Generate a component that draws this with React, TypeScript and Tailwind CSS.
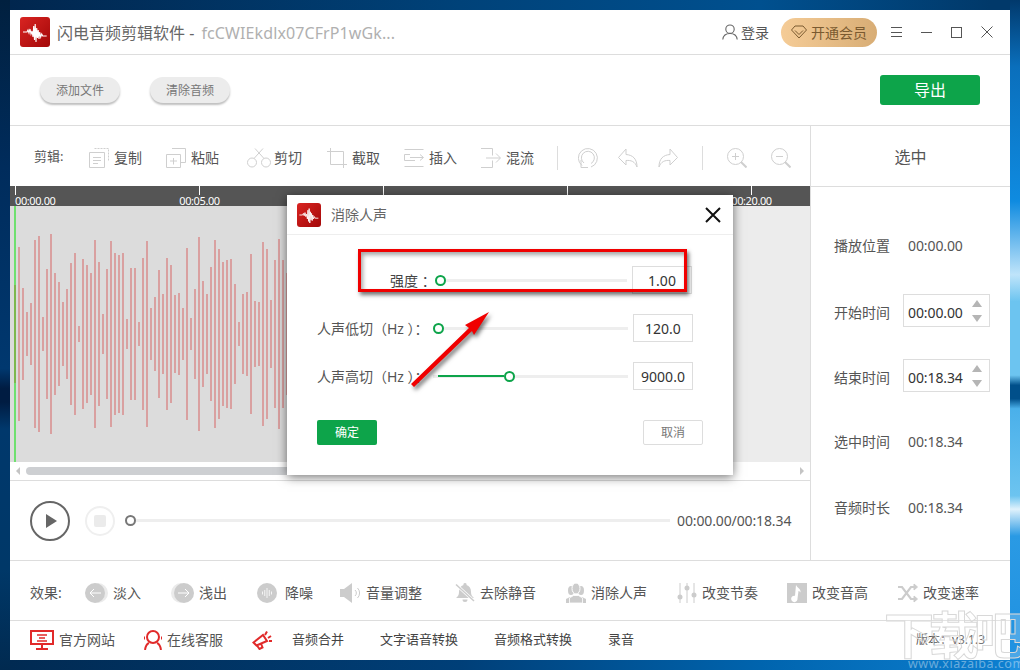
import type { ReactNode } from "react";

const WAVE = [
  87, 46, 22, 31, 94, 98, 17, 65, 100, 61, 52, 32, 45, 71, 81, 8, 75, 69, 61, 94, 72, 20, 65, 93, 81, 79, 81, 15, 66,
  66, 12, 76, 93, 26, 37, 64, 40, 76, 69, 39, 41, 26, 86, 16, 45, 97, 53, 40, 67, 94, 85, 72, 74, 75, 50, 12, 40, 42,
  80, 33, 32, 92, 85, 34, 74, 95, 74, 61,
];

function Logo({ size }: { size: string }) {
  return (
    <div
      className={`${size} flex shrink-0 items-center justify-center rounded-[3px] bg-[linear-gradient(135deg,#d92422,#a30808)]`}
    >
      <svg viewBox="0 0 30 30" className="h-full w-full" fill="none" stroke="#fff" strokeWidth="1.1">
        <path d="M3 15h4l1-2 1 3 1-4 1 5 1-3 1 6 .7-11 .8 14 .7-16 .8 18 .7-14 .8 10 .7-8 .8 9 .7-7 1 5 1-3 1 2h4" />
      </svg>
    </div>
  );
}

function Line({ children, w = 20, h = 20, className = "" }: { children: ReactNode; w?: number; h?: number; className?: string }) {
  return (
    <svg width={w} height={h} viewBox={`0 0 ${w} ${h}`} fill="none" stroke="#cfcfcf" strokeWidth="1" className={`shrink-0 ${className}`}>
      {children}
    </svg>
  );
}

function Tool({ icon, label, className }: { icon: ReactNode; label: string; className: string }) {
  return (
    <div className={`flex items-center ${className}`}>
      {icon}
      <span className="ml-[5px]">{label}</span>
    </div>
  );
}

function Thumb({ color = "border-[#0da44a]" }: { color?: string }) {
  return <div className={`h-[11px] w-[11px] shrink-0 rounded-full border-[2.5px] bg-white ${color}`} />;
}

function ParamRow({
  label,
  value,
  fill = 0,
  labelClass,
  trackClass,
}: {
  label: string;
  value: string;
  fill?: number;
  labelClass: string;
  trackClass: string;
}) {
  return (
    <div className="flex h-[28px] items-center">
      <span className={`shrink-0 whitespace-nowrap ${labelClass}`}>{label}</span>
      <div className={`flex h-[3px] shrink-0 items-center bg-[#eeeeee] ${trackClass}`}>
        {fill > 0 && <div className="ml-[5px] h-[2px] bg-[#0da44a]" style={{ width: fill }} />}
        <Thumb />
      </div>
      <div className="ml-[5px] flex h-[28px] w-[60px] items-center justify-center border border-[#dddddd] text-[#333]">
        {value}
      </div>
    </div>
  );
}

function TimeRow({ label, value, spin, textClass = "" }: { label: string; value: string; spin?: boolean; textClass?: string }) {
  return (
    <div className="flex h-[33px] items-center tracking-[-0.1px]">
      <span className={`w-[69px] shrink-0 tracking-normal ${textClass}`}>{label}</span>
      {spin ? (
        <div className="flex h-[33px] w-[87px] items-center justify-between border border-[#dddddd] pl-[4px] pr-[7px] text-[#333]">
          <span className={textClass}>{value}</span>
          <div className="flex flex-col gap-[8px]">
            <div className="h-0 w-0 border-x-[5.5px] border-b-[7px] border-x-transparent border-b-[#b5b5b5]" />
            <div className="h-0 w-0 border-x-[5.5px] border-t-[7px] border-x-transparent border-t-[#b5b5b5]" />
          </div>
        </div>
      ) : (
        <span className={`ml-[5px] ${textClass}`}>{value}</span>
      )}
    </div>
  );
}

export default function App() {
  return (
    <div className="relative flex h-[670px] w-[1020px] overflow-hidden bg-white font-['Noto_Sans','Noto_Sans_CJK_SC',sans-serif] text-[14px] text-[#555]">
      <div className="w-[10px] shrink-0 bg-[linear-gradient(180deg,#01203f_0%,#002c5c_25%,#00386f_55%,#001c42_58%,#001c42_60%,#00386c_64%,#003868_85%,#012a50_100%)]" />

      <div className="flex w-[1000px] flex-col">
        <div className="h-[10px] shrink-0 bg-[linear-gradient(90deg,#01264e,#004279_45%,#00508f_75%,#01396a_98%)]" />

        <div className="flex h-[650px] flex-col bg-white">
          {/* title bar */}
          <div className="flex h-[45px] shrink-0 items-center border-b border-[#dddddd] pl-[10px]">
            <Logo size="h-[30px] w-[30px]" />
            <div className="ml-[7px] whitespace-nowrap pt-[2px] text-[16px] text-[#666]">
              闪电音频剪辑软件 - <span className="ml-[3px] tracking-[0.1px] text-[#b0b0b0]">fcCWIEkdlx07CFrP1wGk...</span>
            </div>
            <div className="ml-auto flex items-center pr-[17px]">
              <svg width="16" height="16" viewBox="0 0 16 16" fill="none" stroke="#666" strokeWidth="1.1">
                <circle cx="8" cy="5.2" r="4.2" />
                <path d="M.8 15.5c.4-3.7 3-6 7.2-6s6.8 2.3 7.2 6" />
              </svg>
              <span className="ml-[3px]">登录</span>
              <div className="ml-[12px] flex h-[29px] w-[96px] items-center justify-center gap-[4px] rounded-full bg-[linear-gradient(90deg,#f5cc97,#d8ad75)] text-[#7a5a30]">
                <svg width="16" height="14" viewBox="0 0 16 14" fill="none" stroke="#7a5a30" strokeWidth="1">
                  <path d="M4 1h8l3.5 4L8 13 .5 5z" />
                  <path d="M4 5.5l4 4 4-4" />
                </svg>
                开通会员
              </div>
              <div className="ml-[14px] flex w-[11px] flex-col gap-[3.5px]">
                <div className="h-px bg-[#555]" />
                <div className="h-px bg-[#555]" />
                <div className="h-px bg-[#555]" />
              </div>
              <div className="ml-[19px] h-px w-[11px] bg-[#555]" />
              <div className="ml-[19px] h-[11px] w-[11px] border border-[#555]" />
              <svg width="12" height="12" viewBox="0 0 12 12" stroke="#555" className="ml-[19px]">
                <path d="M.5.5l11 11M11.5.5l-11 11" />
              </svg>
            </div>
          </div>

          {/* file actions */}
          <div className="flex h-[71px] shrink-0 items-center border-b border-[#dddddd] px-[30px] text-[12px] text-[#777]">
            <div className="flex h-[26px] w-[80px] items-center justify-center rounded-full bg-[#ececec] pt-px shadow-[0_2px_2px_rgba(0,0,0,0.25)]">
              添加文件
            </div>
            <div className="ml-[30px] flex h-[26px] w-[80px] items-center justify-center rounded-full bg-[#ececec] pt-px shadow-[0_2px_2px_rgba(0,0,0,0.25)]">
              清除音频
            </div>
            <div className="ml-auto flex h-[30px] w-[100px] items-center justify-center rounded-[3px] bg-[#0da44a] text-[16px] text-white">
              导出
            </div>
          </div>

          <div className="flex h-[435px] shrink-0 border-b border-[#dddddd]">
            {/* editor */}
            <div className="flex w-[800px] shrink-0 flex-col">
              <div className="flex h-[60px] shrink-0 items-center pl-[24px] pt-[4px] [&_span]:mb-[2px]">
                <span className="w-[55px] shrink-0 text-[13px]">剪辑:</span>
                <Tool
                  className="w-[77px]"
                  label="复制"
                  icon={
                    <Line>
                      <path d="M5.5.5h14v13" strokeDasharray="2 1" />
                      <path d="M.5 4.5h15v15H.5z" fill="#fff" />
                      <path d="M4 9.5h8M4 12.5h8M4 15.5h5" />
                    </Line>
                  }
                />
                <Tool
                  className="w-[81px]"
                  label="粘贴"
                  icon={
                    <Line>
                      <path d="M6 .5h13.5v14H14" />
                      <path d="M.5 6.5h14v13H.5z" fill="#fff" />
                      <path d="M7.5 10v6.5M4 13h7" />
                    </Line>
                  }
                />
                <Tool
                  className="w-[80px]"
                  label="剪切"
                  icon={
                    <Line w={24} className="-mr-[2px]">
                      <circle cx="5" cy="14.5" r="4.5" />
                      <circle cx="19" cy="14.5" r="4.5" />
                      <path d="M7 10.5L16 .5M17 10.5L8 .5" />
                    </Line>
                  }
                />
                <Tool
                  className="w-[77px]"
                  label="截取"
                  icon={
                    <Line>
                      <path d="M0 3.5h16.5V20M3.5 0v16.5H20" />
                    </Line>
                  }
                />
                <Tool
                  className="w-[77px]"
                  label="插入"
                  icon={
                    <Line>
                      <path d="M.5 1.5h19M6 6.5H.5v6H11M19.5 18.5H.5" />
                      <path d="M6 9.5h13M16 6.5l3.5 3-3.5 3" />
                    </Line>
                  }
                />
                <Tool
                  className="w-[76px]"
                  label="混流"
                  icon={
                    <Line>
                      <path d="M0 .5h11.5v7M11.5 12.5v7H0" />
                      <path d="M5 10h14M15 5.5l4.5 4.5-4.5 4.5" />
                    </Line>
                  }
                />
                <div className="h-[24px] w-px bg-[#dddddd]" />
                <div className="ml-[20px]">
                  <Line>
                    <path d="M13 19A9.5 9.5 0 1 0 4 17.5" />
                    <path d="M13 15.5A6.5 6.5 0 1 0 6 15" />
                    <path d="M3 12v7.5h7" />
                  </Line>
                </div>
                <div className="ml-[20px]">
                  <Line>
                    <path d="M8 1L.5 9.500 8 17v-4.500c5-.5 9 1 11 6.500 0-8-4-12-11-12.500z" />
                  </Line>
                </div>
                <div className="ml-[20px]">
                  <Line>
                    <path d="M12 1l7.500 8.500L12 17v-4.500c-5-.5-9 1-11 6.500 0-8 4-12 11-12.500z" />
                  </Line>
                </div>
                <div className="ml-[24px] h-[24px] w-px bg-[#dddddd]" />
                <div className="ml-[24px]">
                  <Line>
                    <circle cx="8.5" cy="8.5" r="8" />
                    <path d="M8.5 5v7M5 8.5h7" />
                    <path d="M14 14l5.5 5.5" strokeWidth="2" />
                  </Line>
                </div>
                <div className="ml-[24px]">
                  <Line>
                    <circle cx="8.5" cy="8.5" r="8" />
                    <path d="M5 8.5h7" />
                    <path d="M14 14l5.5 5.5" strokeWidth="2" />
                  </Line>
                </div>
              </div>

              {/* ruler */}
              <div className="flex h-[20px] shrink-0 gap-[183px] bg-[#555555] pl-[5px] text-[11px] leading-[11px] tracking-[-0.4px] text-white">
                {["00:00.00", "00:05.00", "00:10.00", "00:15.00", "00:20.00"].map((t, i) => (
                  <div key={t} className={`flex w-px flex-col ${i === 0 ? "items-start" : "items-center"}`}>
                    <div className="h-[9px] w-px shrink-0 bg-white" />
                    <span className="whitespace-nowrap">{t}</span>
                  </div>
                ))}
              </div>

              {/* wave */}
              <div className="flex h-[256px] shrink-0 bg-[#ececec]">
                <div className="flex w-[680px] items-center overflow-hidden bg-[#dcdcdc] pl-[4px]">
                  <div className="flex h-full w-[2px] shrink-0 flex-col justify-center bg-[#6fe06f]">
                    <div className="h-[98px] bg-[#7db84e]" />
                  </div>
                  <div className="ml-[2px] flex items-center gap-[2px]">
                    {WAVE.map((v, i) => (
                      <div key={i} className="w-[2px] shrink-0 bg-[#d9a0a0]" style={{ height: v * 2 }} />
                    ))}
                  </div>
                </div>
              </div>

              {/* scrollbar */}
              <div className="flex h-[18px] shrink-0 items-center px-[6px]">
                <div className="h-0 w-0 border-y-[4px] border-r-[4px] border-y-transparent border-r-[#c4c4c4]" />
                <div className="ml-[6px] h-[8px] w-[340px] rounded-full bg-[#cdcfd2]" />
                <div className="ml-auto h-0 w-0 border-y-[4px] border-l-[4px] border-y-transparent border-l-[#c4c4c4]" />
              </div>

              {/* player */}
              <div className="flex flex-1 items-center border-t border-[#dddddd] pl-[20px]">
                <div className="flex h-[40px] w-[40px] items-center justify-center rounded-full border-2 border-[#666]">
                  <div className="ml-[3px] h-0 w-0 border-y-[7.5px] border-l-[11px] border-y-transparent border-l-[#666]" />
                </div>
                <div className="ml-[15px] flex h-[30px] w-[30px] items-center justify-center rounded-full border-2 border-[#efefef]">
                  <div className="h-[12px] w-[12px] rounded-[2px] bg-[#ebebeb]" />
                </div>
                <div className="ml-[10px] flex h-[3px] w-[545px] items-center bg-[#eeeeee]">
                  <Thumb color="border-[#777]" />
                </div>
                <span className="ml-[7px] whitespace-nowrap tracking-[-0.12px]">00:00.00/00:18.34</span>
              </div>
            </div>

            {/* selection panel */}
            <div className="flex flex-1 flex-col border-l border-[#dddddd]">
              <div className="flex h-[61px] shrink-0 items-center justify-center border-b border-[#dddddd] pt-[2px] text-[16px] text-[#555]">
                选中
              </div>
              <div className="flex flex-col gap-[32px] pl-[23px] pt-[42px]">
                <TimeRow label="播放位置" value="00:00.00" />
                <TimeRow label="开始时间" value="00:00.00" spin textClass="pt-[3px]" />
                <TimeRow label="结束时间" value="00:18.34" spin textClass="pt-[3px]" />
                <TimeRow label="选中时间" value="00:18.34" textClass="pt-px" />
                <TimeRow label="音频时长" value="00:18.34" textClass="pt-[3px]" />
              </div>
            </div>
          </div>

          {/* effects */}
          <div className="flex h-[60px] shrink-0 items-center border-b border-[#dddddd] pl-[20px] pt-[4px]">
            <span className="w-[55px] shrink-0">效果:</span>
            <Tool
              className="w-[86px]"
              label="淡入"
              icon={
                <svg width="23" height="20" viewBox="0 0 23 20">
                  <circle cx="13" cy="10" r="10" fill="#ebebeb" />
                  <circle cx="10" cy="10" r="10" fill="#cccccc" />
                  <path d="M16 10H5M9 6l-4 4 4 4" stroke="#fff" fill="none" />
                </svg>
              }
            />
            <Tool
              className="w-[86px]"
              label="浅出"
              icon={
                <svg width="23" height="20" viewBox="0 0 23 20">
                  <circle cx="10" cy="10" r="10" fill="#ebebeb" />
                  <circle cx="13" cy="10" r="10" fill="#cccccc" />
                  <path d="M7 10h11M14 6l4 4-4 4" stroke="#fff" fill="none" />
                </svg>
              }
            />
            <div className="flex w-[83px] items-center">
              <svg width="20" height="20" viewBox="0 0 20 20" className="shrink-0">
                <circle cx="10" cy="10" r="10" fill="#cccccc" />
                <path d="M5.5 8.5v3M7.75 7v6M10 5v10M12.25 7v6M14.5 8.5v3" stroke="#fff" strokeWidth=".8" />
              </svg>
              <span className="ml-[8px]">降噪</span>
            </div>
            <div className="flex w-[115px] items-center">
              <svg width="23" height="20" viewBox="0 0 23 20" className="shrink-0">
                <path d="M0 6h4l8-6v20l-8-6H0z" fill="#cccccc" />
                <path d="M15 7a4 4 0 0 1 0 6M17.5 5a7 7 0 0 1 0 10" stroke="#cccccc" fill="none" />
              </svg>
              <span className="ml-[3px]">音量调整</span>
            </div>
            <Tool
              className="w-[111px]"
              label="去除静音"
              icon={
                <svg width="20" height="20" viewBox="0 0 20 20" className="shrink-0">
                  <path d="M10 0a1.5 1.5 0 0 1 1.5 2c3 1 4.5 3.5 4.5 7 0 3 1 4 3 6H1c2-2 3-3 3-6 0-3.5 1.5-6 4.5-7A1.5 1.5 0 0 1 10 0zM7.5 16.5h5a2.500 2.500 0 0 1-5 0z" fill="#cccccc" />
                  <path d="M1 1.5L19 18" stroke="#fff" strokeWidth="3" />
                  <path d="M1 1.5L19 18" stroke="#cccccc" strokeWidth="1.5" />
                </svg>
              }
            />
            <Tool
              className="w-[111px]"
              label="消除人声"
              icon={
                <svg width="20" height="20" viewBox="0 0 20 20" className="shrink-0" fill="#cccccc">
                  <ellipse cx="5" cy="7.5" rx="3" ry="4.5" />
                  <ellipse cx="15" cy="7.5" rx="3" ry="4.5" />
                  <path d="M0 20v-4l4-2h12l4 2v4z" />
                  <ellipse cx="10" cy="5.5" rx="4" ry="5.5" stroke="#fff" />
                  <path d="M3.5 20v-5l4-2.5h5l4 2.5v5z" stroke="#fff" strokeWidth=".8" />
                </svg>
              }
            />
            <Tool
              className="w-[110px]"
              label="改变节奏"
              icon={
                <svg width="20" height="20" viewBox="0 0 20 20" className="shrink-0">
                  <path d="M3 0v20M10 0v20M17 0v20" stroke="#cccccc" />
                  <circle cx="3" cy="14" r="2.5" fill="#cccccc" />
                  <circle cx="10" cy="5" r="2.5" fill="#cccccc" />
                  <circle cx="17" cy="12" r="2.5" fill="#cccccc" />
                </svg>
              }
            />
            <Tool
              className="w-[111px]"
              label="改变音高"
              icon={
                <svg width="20" height="20" viewBox="0 0 20 20" className="shrink-0">
                  <path d="M0 0h20v20H0z" fill="#cccccc" />
                  <path d="M9 2c1.5 3 5 3.5 4.5 7.5C12.500 8 12 8 11.500 8l-1 7.500A3.200 3.200 0 1 1 8 12.800z" fill="#fff" />
                </svg>
              }
            />
            <Tool
              label="改变速率"
              className=""
              icon={
                <svg width="20" height="20" viewBox="0 0 20 20" fill="none" stroke="#cccccc" className="shrink-0">
                  <path d="M0 4h4l9 12h4M0 16h4l9-12h4" strokeWidth="2.2" />
                  <path d="M16 1l3.5 3-3.5 3zM16 13l3.5 3-3.5 3z" fill="#cccccc" strokeWidth="1" />
                </svg>
              }
            />
          </div>

          {/* footer */}
          <div className="flex flex-1 items-center pb-[2px] pl-[20px] pr-[25px] text-[13px] text-[#444]">
            <Tool
              className="w-[114px] text-[14px] text-[#555]"
              label="官方网站"
              icon={
                <svg width="24" height="20" viewBox="0 0 24 20" fill="none" stroke="#e12a2a" strokeWidth="2">
                  <path d="M1 1h22v13H1zM12 14v4M6 19h12" />
                  <path d="M7 5h10M9 8h6M7 11h10" strokeWidth="1.5" />
                </svg>
              }
            />
            <Tool
              className="w-[108px] text-[14px] text-[#555]"
              label="在线客服"
              icon={
                <svg width="18" height="20" viewBox="0 0 18 20" fill="none" stroke="#e12a2a" strokeWidth="2">
                  <circle cx="9" cy="7" r="6" />
                  <path d="M5 13C2.5 14 1.5 16.5 1 20M13 13c2.5 1 3.5 3.5 4 7" />
                  <path d="M0 6.5v3M18 6.5v3" />
                </svg>
              }
            />
            <div className="flex w-[128px] items-center">
              <svg width="20" height="20" viewBox="0 0 20 20" fill="none" stroke="#e12a2a" strokeWidth="2" className="shrink-0">
                <path d="M1.5 12.5L11 5l4 6-10.5 4.500zM5 15.500l2.500 3.500 3-1.500-1.500-4" />
                <path d="M13 5l2-3.500M16 8l3-2M17 11h3" />
              </svg>
              <span className="ml-[20px]">音频合并</span>
            </div>
            <span className="w-[114px] shrink-0">文字语音转换</span>
            <span className="w-[114px] shrink-0">音频格式转换</span>
            <span>录音</span>
            <span className="ml-auto text-[12px] text-[#555]">版本：v3.1.3</span>
          </div>
        </div>

        <div className="h-[10px] shrink-0 bg-[linear-gradient(90deg,#012a52,#003f78_45%,#0064ae_75%,#0d7fd0)]" />
      </div>

      <div className="w-[10px] shrink-0 bg-[linear-gradient(180deg,#01396c_0%,#0a6fbc_10%,#0f8be0_30%,#bfe4fa_41%,#6cc4f0_45%,#6cc4f0_56%,#004f8a_57.5%,#004f8a_59.5%,#4ab0ea_61%,#6cc4f0_74%,#e0f2fc_76%,#2a9ae4_80%,#1e90e0_100%)]" />

      {/* dialog */}
      <div className="absolute left-[287px] top-[195px] flex h-[280px] w-[446px] flex-col bg-white shadow-[0_2px_10px_rgba(0,0,0,0.55)]">
        <div className="flex h-[40px] shrink-0 items-center border-b border-[#eeeeee] pl-[10px] pr-[12px]">
          <Logo size="h-[24px] w-[24px]" />
          <span className="ml-[10px] text-[#666]">消除人声</span>
          <svg width="16" height="16" viewBox="0 0 16 16" stroke="#111" strokeWidth="2" className="ml-auto">
            <path d="M1 1l14 14M15 1L1 15" />
          </svg>
        </div>
        <div className="flex flex-col gap-[20px] pl-[30px] pt-[31px]">
          <ParamRow labelClass="w-[118px] pl-[73px] text-[#444]" trackClass="w-[192px]" label="强度 ：" value="1.00" />
          <ParamRow labelClass="w-[116px]" trackClass="w-[195px]" label="人声低切（Hz ）：" value="120.0" />
          <ParamRow labelClass="w-[116px]" trackClass="w-[195px]" label="人声高切（Hz ）：" value="9000.0" fill={66} />
        </div>
        <div className="flex items-center px-[30px] pt-[30px] text-[12px]">
          <div className="flex h-[25px] w-[60px] items-center justify-center rounded-[2px] bg-[#0da44a] text-white">确定</div>
          <div className="ml-auto flex h-[25px] w-[60px] items-center justify-center rounded-[2px] border border-[#dddddd] text-[#777]">
            取消
          </div>
        </div>
      </div>

      {/* annotation */}
      <div className="pointer-events-none absolute left-[358px] top-[249px] h-[43px] w-[329px] border-[3px] border-[#f00000] shadow-[2px_3px_4px_rgba(0,0,0,0.55),inset_2px_3px_4px_rgba(0,0,0,0.35)]" />
      <svg width="1020" height="670" className="pointer-events-none absolute left-0 top-0">
        <path
          d="M411 384L469 328 465 325 489 312 474 335 472 331 414 387z"
          fill="#f00000"
          style={{ filter: "drop-shadow(2px 3px 2px rgba(0,0,0,.55))" }}
        />
      </svg>

      {/* watermark */}
      <div className="pointer-events-none absolute left-[884px] top-[598px] whitespace-nowrap text-[50px] font-bold tracking-[-5px] text-white/20 [-webkit-text-stroke:1px_#d8d8d8]">
        下载吧
      </div>
      <div className="pointer-events-none absolute left-[908px] top-[655px] text-[12.5px] tracking-[0.5px] text-white/40">
        www.xiazaiba.com
      </div>
    </div>
  );
}
